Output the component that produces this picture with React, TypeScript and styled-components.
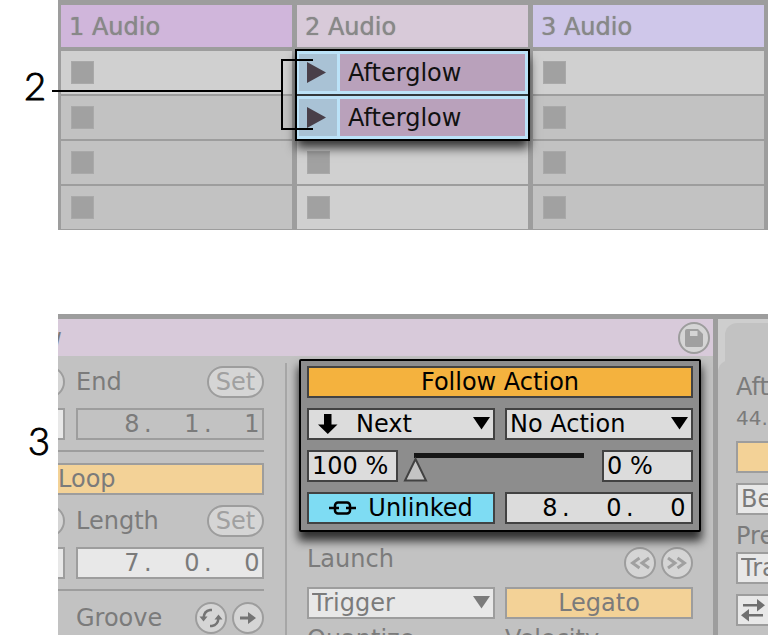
import React from "react";
import styled, { createGlobalStyle, css } from "styled-components";

const GlobalStyle = createGlobalStyle`
  *, *::before, *::after { box-sizing: border-box; }
  html, body { margin: 0; background: #fff; }
  body, button, input, select {
    font-family: "DejaVu Sans", Inter, sans-serif;
    font-size: 24px;
    line-height: 28px;
  }
`;

const line = "#9d9d9d";
const dimText = "#7b7b7b";

const Page = styled.main`
  height: 100vh;
  display: flex;
  flex-direction: column;
  gap: 84px;
  overflow: hidden;
`;

const Figure = styled.section`
  position: relative;
  display: grid;
  grid-template-columns: 58px minmax(0, 1fr);
  &:last-child {
    flex: 1;
    min-height: 0;
  }
`;

const Gutter = styled.div<{ $top: number; $left: number }>`
  padding: ${(p) => p.$top}px 0 0 ${(p) => p.$left}px;
  font-family: Lato, sans-serif;
  font-weight: 300;
  font-size: 38px;
  line-height: 40px;
  color: #000;
  -webkit-text-stroke: 1px #000;
`;

const Callout = styled.svg`
  position: absolute;
  left: 0;
  top: 0;
  pointer-events: none;
`;

/* Session view */

const Session = styled.div`
  display: grid;
  grid-template-columns: repeat(3, minmax(0, 1fr));
  gap: 5px;
  padding: 5px 4px 1px 3px;
  background: ${line};
`;

const Track = styled.div`
  display: flex;
  flex-direction: column;
  gap: 4px;
`;

const TrackTitle = styled.h2<{ $color: string }>`
  margin: 0;
  height: 42px;
  padding: 0 8px;
  background: ${(p) => p.$color};
  color: #888;
  font-size: 24px;
  font-weight: 500;
  line-height: 44px;
  text-shadow: 0 0 1px #888;
`;

const Slots = styled.div`
  display: flex;
  flex-direction: column;
  gap: 2px;
`;

const Slot = styled.div<{ $bright?: boolean }>`
  height: 43px;
  padding: 0 10px;
  display: flex;
  align-items: center;
  background: ${(p) => (p.$bright ? "#d0d0d0" : "#c2c2c2")};
`;

const StopButton = styled.button`
  width: 23px;
  height: 23px;
  padding: 0;
  border: 1px solid #a9a9a9;
  background: #a1a1a1;
`;

const ClipGroup = styled.div`
  position: relative;
  display: flex;
  flex-direction: column;
  gap: 2px;
  background: #33393d;
  box-shadow: 0 0 0 2px #000, 0 8px 10px 1px rgba(0, 0, 0, 0.75);
`;

const Clip = styled.div`
  height: 43px;
  display: grid;
  grid-template-columns: 38px minmax(0, 1fr);
  gap: 3px;
  padding: 3px 3px 3px 2px;
  background: #bbe2f8;
`;

const LaunchButton = styled.button`
  padding: 0 0 0 7px;
  border: 0;
  background: #a9c2d5;
  display: flex;
  align-items: center;
`;

const ClipName = styled.div`
  padding-left: 8px;
  background: #b9a1bb;
  color: #111;
  line-height: 39px;
  height: 37px;
`;

/* Clip view */

const ClipView = styled.div`
  display: grid;
  grid-template-columns: minmax(0, 1fr) 50px;
  gap: 5px;
  padding-top: 5px;
  background: ${line};
  overflow: hidden;
`;

const ClipPanel = styled.div`
  min-width: 0;
  background: #c2c2c2;
`;

const ClipHeader = styled.header`
  height: 37px;
  padding-right: 3px;
  display: flex;
  align-items: center;
  justify-content: space-between;
  background: #d8cada;
`;

const CutTitle = styled.span`
  width: 4px;
  overflow: hidden;
  display: flex;
  justify-content: flex-end;
  color: ${dimText};
`;

const RoundButton = styled.button`
  width: 32px;
  height: 32px;
  padding: 0;
  border: 2px solid ${line};
  border-radius: 50%;
  background: #d5d5d5;
  display: grid;
  place-items: center;
`;

const Columns = styled.div`
  display: grid;
  grid-template-columns: 229px minmax(0, 1fr);
`;

const SampleColumn = styled.div`
  position: relative;
  padding: 10px 23px 0 0;
  display: flex;
  flex-direction: column;
  gap: 10px;
  &::after {
    content: "";
    position: absolute;
    right: 0;
    top: 7px;
    bottom: 0;
    width: 2px;
    background: #a6a6a6;
  }
`;

const SampleRow = styled.div`
  height: 32px;
  display: grid;
  grid-template-columns: 7px minmax(0, 1fr);
  gap: 11px;
`;

const CutCell = styled.div`
  display: flex;
  justify-content: flex-end;
  overflow: hidden;
`;

const RowBody = styled.div`
  display: flex;
  align-items: center;
  gap: 5px;
  color: ${dimText};
`;

const Label = styled.span`
  flex: 1;
  color: ${dimText};
`;

const LaunchLabel = styled(Label)`
  line-height: 24px;
`;

const SetButton = styled.button`
  flex: none;
  width: 57px;
  height: 32px;
  padding: 0;
  border: 2px solid ${line};
  border-radius: 16px;
  background: #d5d5d5;
  color: #a0a0a0;
`;

const Rule = styled.hr`
  width: 100%;
  height: 2px;
  margin: 0 0 1px;
  border: 0;
  background: ${line};
`;

type Tone = "dim" | "flat" | "live";
const tones = {
  dim: css`
    border: 2px solid ${line};
    background: #e8e8e8;
    color: ${dimText};
  `,
  flat: css`
    border: 2px solid ${line};
    background: #c2c2c2;
    color: ${dimText};
  `,
  live: css`
    border: 2px solid #424242;
    background: #dcdcdc;
    color: #000;
  `,
};

const Box = styled.div<{ $tone: Tone }>`
  flex: 1;
  min-width: 0;
  height: 32px;
  padding-right: ${(p) => (p.$tone === "live" ? 5 : 2)}px;
  display: flex;
  align-items: center;
  justify-content: flex-end;
  ${(p) => tones[p.$tone]}
`;

const CutBox = styled.div`
  flex: none;
  width: 7px;
  height: 32px;
  border: 2px solid ${line};
  border-left: 0;
  background: #e8e8e8;
`;

const Part = styled.span<{ $width: number }>`
  flex: none;
  width: ${(p) => p.$width}px;
  display: flex;
  gap: 4px;
`;

const Digit = styled.input`
  width: 16px;
  height: 28px;
  padding: 0;
  border: 0;
  background: none;
  color: inherit;
  text-align: center;
`;

const ToggleButton = styled.button<{ $live?: boolean; $color: string; $left?: boolean }>`
  width: 100%;
  height: 32px;
  padding: 0;
  border: 2px solid ${(p) => (p.$live ? "#424242" : line)};
  background: ${(p) => p.$color};
  color: ${(p) => (p.$live ? "#000" : dimText)};
  display: flex;
  align-items: center;
  justify-content: ${(p) => (p.$left ? "flex-start" : "center")};
  gap: 12px;
`;

const LoopButton = styled(ToggleButton)`
  border-left: 0;
`;

const LaunchColumn = styled.div`
  padding: 3px 12px 0;
`;

const FollowPanel = styled.div`
  position: relative;
  padding: 5px 6px 6px;
  border: 2px solid #000;
  border-radius: 2px;
  background: #8d8d8d;
  box-shadow: 0 8px 10px 1px rgba(0, 0, 0, 0.75);
  display: flex;
  flex-direction: column;
  gap: 10px;
`;

const Pair = styled.div`
  display: grid;
  grid-template-columns: repeat(2, minmax(0, 1fr));
  gap: 10px;
`;

const ChanceRow = styled.div`
  display: grid;
  grid-template-columns: 91px minmax(0, 1fr) 91px;
  column-gap: 5px;
`;

const TextField = styled.input<{ $tone: Tone }>`
  width: 100%;
  height: 32px;
  padding: 0 3px;
  border-radius: 0;
  ${(p) => tones[p.$tone]}
`;

const thumb = `url("data:image/svg+xml,%3Csvg xmlns='http://www.w3.org/2000/svg' width='25' height='26'%3E%3Cpath d='M12.5 3 L23 24.5 H2 Z' fill='%23c4c4c4' stroke='%23424242' stroke-width='2'/%3E%3C/svg%3E")`;

const Slider = styled.input`
  appearance: none;
  width: calc(100% - 1px);
  height: 32px;
  margin: 0;
  background: linear-gradient(#161616, #161616) 11px 3px / calc(100% - 23px) 5px no-repeat;
  &::-webkit-slider-runnable-track {
    height: 32px;
  }
  &::-webkit-slider-thumb {
    appearance: none;
    width: 25px;
    height: 26px;
    margin-top: 6px;
    background: ${thumb};
  }
`;

const SelectWrap = styled.div`
  position: relative;
`;

const Select = styled.select<{ $tone: Tone; $indent?: boolean }>`
  appearance: none;
  width: 100%;
  height: 32px;
  padding: 0 24px 0 ${(p) => (p.$indent ? 47 : 3)}px;
  border-radius: 0;
  ${(p) => tones[p.$tone]}
`;

const SelectArrow = styled.svg`
  position: absolute;
  right: 5px;
  top: 9px;
  pointer-events: none;
`;

const SelectIcon = styled.svg`
  position: absolute;
  left: 11px;
  top: 6px;
  pointer-events: none;
`;

const LaunchArea = styled.div`
  padding: 15px 8px 0;
  display: flex;
  flex-direction: column;
  gap: 8px;
`;

const LaunchHeading = styled.div`
  height: 32px;
  display: flex;
  gap: 5px;
`;

const SamplePanel = styled.aside`
  background: #cecece;
  padding: 4px 0 0 7px;
  overflow: hidden;
`;

const Tab = styled.div`
  height: 100%;
  border-top-left-radius: 12px;
  padding: 50px 0 0 11px;
  background: #c2c2c2;
  box-shadow: -7px 37px 0 0 #c2c2c2;
  color: ${dimText};
  white-space: nowrap;
`;

const TabText = styled.div<{ $small?: boolean }>`
  height: ${(p) => (p.$small ? 40 : 28)}px;
  font-size: ${(p) => (p.$small ? 20 : 24)}px;
  line-height: ${(p) => (p.$small ? 34 : 28)}px;
`;

const Stack = styled.div`
  display: flex;
  flex-direction: column;
  gap: 10px;
  width: 90px;
`;

const Heading = styled.div`
  height: 17px;
  line-height: 22px;
`;

const StopSlot = ({ bright, label }: { bright?: boolean; label: string }) => (
  <Slot $bright={bright}>
    <StopButton aria-label={label} />
  </Slot>
);

const ClipSlot = ({ name }: { name: string }) => (
  <Clip>
    <LaunchButton aria-label={`Launch ${name}`}>
      <svg width="21" height="23" viewBox="0 0 21 23">
        <path d="M1 1 L20 11.5 L1 22 Z" fill="#493f49" />
      </svg>
    </LaunchButton>
    <ClipName>{name}</ClipName>
  </Clip>
);

const Position = ({ label, values, tone, pitch }: { label: string; values: string[]; tone: Tone; pitch: number }) => (
  <Box $tone={tone} role="group" aria-label={label}>
    {values.map((v, i) => (
      <Part key={i} $width={i < 2 ? pitch : 16}>
        <Digit defaultValue={v} aria-label={`${label} ${["bars", "beats", "sixteenths"][i]}`} />
        {i < 2 && "."}
      </Part>
    ))}
  </Box>
);

const DropDown = ({ label, value, tone, icon }: { label: string; value: string; tone: Tone; icon?: React.ReactNode }) => (
  <SelectWrap>
    <Select $tone={tone} $indent={!!icon} aria-label={label}>
      <option>{value}</option>
    </Select>
    {icon}
    <SelectArrow width="17" height="13" viewBox="0 0 17 13">
      <path d="M0 0 H17 L8.5 12.5 Z" fill={tone === "live" ? "#000" : dimText} />
    </SelectArrow>
  </SelectWrap>
);

export default function App() {
  return (
    <>
      <GlobalStyle />
      <Page>
        <Figure>
          <Gutter $top={65} $left={24}>2</Gutter>
          <Session>
            <Track>
              <TrackTitle $color="#d0b6db">1 Audio</TrackTitle>
              <Slots>
                {[1, 2, 3, 4].map((n) => (
                  <StopSlot key={n} bright={n === 1} label={`Stop track 1, slot ${n}`} />
                ))}
              </Slots>
            </Track>
            <Track>
              <TrackTitle $color="#d8cad9">2 Audio</TrackTitle>
              <Slots>
                <ClipGroup>
                  <ClipSlot name="Afterglow" />
                  <ClipSlot name="Afterglow" />
                </ClipGroup>
                <StopSlot bright label="Stop track 2, slot 3" />
                <StopSlot bright label="Stop track 2, slot 4" />
              </Slots>
            </Track>
            <Track>
              <TrackTitle $color="#cfc7ea">3 Audio</TrackTitle>
              <Slots>
                {[1, 2, 3, 4].map((n) => (
                  <StopSlot key={n} bright={n === 1} label={`Stop track 3, slot ${n}`} />
                ))}
              </Slots>
            </Track>
          </Session>
          <Callout width="320" height="140" fill="none" stroke="#000" strokeWidth="2">
            <path d="M52 91 H282 M313 60 H282 V129 H313" />
          </Callout>
        </Figure>

        <Figure>
          <Gutter $top={106} $left={28}>3</Gutter>
          <ClipView>
            <ClipPanel>
              <ClipHeader>
                <CutTitle>w</CutTitle>
                <RoundButton aria-label="Save default clip">
                  <svg width="18" height="18" viewBox="0 0 18 18">
                    <path fillRule="evenodd" d="M2 0 H13 L18 5 V16 Q18 18 16 18 H2 Q0 18 0 16 V2 Q0 0 2 0 Z M5 2 V7 H12.500 V2 Z" fill="#a0a0a0" />
                  </svg>
                </RoundButton>
              </ClipHeader>
              <Columns>
                <SampleColumn>
                  <SampleRow>
                    <CutCell><SetButton aria-label="Set start" /></CutCell>
                    <RowBody><Label>End</Label><SetButton>Set</SetButton></RowBody>
                  </SampleRow>
                  <SampleRow>
                    <CutCell><CutBox /></CutCell>
                    <RowBody><Position label="End" values={["8", "1", "1"]} tone="flat" pitch={60} /></RowBody>
                  </SampleRow>
                  <Rule />
                  <LoopButton $color="#f3d297" $left>Loop</LoopButton>
                  <SampleRow>
                    <CutCell><SetButton aria-label="Set position" /></CutCell>
                    <RowBody><Label>Length</Label><SetButton>Set</SetButton></RowBody>
                  </SampleRow>
                  <SampleRow>
                    <CutCell><CutBox /></CutCell>
                    <RowBody><Position label="Length" values={["7", "0", "0"]} tone="dim" pitch={60} /></RowBody>
                  </SampleRow>
                  <Rule />
                  <SampleRow>
                    <span />
                    <RowBody>
                      <Label>Groove</Label>
                      <RoundButton aria-label="Hot-swap groove">
                        <svg width="24" height="22" viewBox="0 0 24 22" fill="none" stroke="#747474" strokeWidth="2.500">
                          <path d="M13 3 H11 Q5 4 4.500 11" />
                          <path d="M11 19 H13 Q19 18 19.500 11" />
                          <path d="M0.500 9.500 H8.500 L4.500 14.500 Z M15.500 12.500 H23.500 L19.500 7.500 Z" fill="#747474" stroke="none" />
                        </svg>
                      </RoundButton>
                      <RoundButton aria-label="Commit groove">
                        <svg width="18" height="14" viewBox="0 0 18 14">
                          <path d="M1 5.500 H9 V1 L17 7 L9 13 V8.500 H1 Z" fill="#747474" />
                        </svg>
                      </RoundButton>
                    </RowBody>
                  </SampleRow>
                </SampleColumn>

                <LaunchColumn>
                  <FollowPanel>
                    <ToggleButton $live $color="#f4b23e">Follow Action</ToggleButton>
                    <Pair>
                      <DropDown
                        label="Follow action A"
                        value="Next"
                        tone="live"
                        icon={
                          <SelectIcon width="20" height="20" viewBox="0 0 20 20">
                            <path d="M6 0 H13.500 V10.500 H19.500 L9.800 20 L0 10.500 H6 Z" fill="#000" />
                          </SelectIcon>
                        }
                      />
                      <DropDown label="Follow action B" value="No Action" tone="live" />
                    </Pair>
                    <ChanceRow>
                      <TextField $tone="live" defaultValue="100 %" aria-label="Chance A" />
                      <Slider type="range" min="0" max="100" defaultValue="0" aria-label="Chance balance" />
                      <TextField $tone="live" defaultValue="0 %" aria-label="Chance B" />
                    </ChanceRow>
                    <Pair>
                      <ToggleButton $live $color="#7edcf3">
                        <svg width="27" height="14" viewBox="0 0 27 14" fill="none" stroke="#000" strokeWidth="2.500">
                          <rect x="6" y="1.500" width="15" height="11" rx="3" />
                          <path d="M0 7 H10 M17 7 H27" />
                        </svg>
                        Unlinked
                      </ToggleButton>
                      <Position label="Follow action time" values={["8", "0", "0"]} tone="live" pitch={64} />
                    </Pair>
                  </FollowPanel>
                  <LaunchArea>
                    <LaunchHeading>
                      <LaunchLabel>Launch</LaunchLabel>
                      <RoundButton aria-label="Nudge backward">
                        <svg width="20" height="14" viewBox="0 0 20 14" fill="none" stroke="#a0a0a0" strokeWidth="3">
                          <path d="M9.500 2 L2.500 7 L9.500 12 M19 2 L12 7 L19 12" />
                        </svg>
                      </RoundButton>
                      <RoundButton aria-label="Nudge forward">
                        <svg width="20" height="14" viewBox="0 0 20 14" fill="none" stroke="#a0a0a0" strokeWidth="3">
                          <path d="M1 2 L8 7 L1 12 M10.500 2 L17.500 7 L10.500 12" />
                        </svg>
                      </RoundButton>
                    </LaunchHeading>
                    <Pair>
                      <DropDown label="Launch mode" value="Trigger" tone="dim" />
                      <ToggleButton $color="#f3d297">Legato</ToggleButton>
                    </Pair>
                    <Pair>
                      <LaunchLabel>Quantize</LaunchLabel>
                      <LaunchLabel>Velocity</LaunchLabel>
                    </Pair>
                  </LaunchArea>
                </LaunchColumn>
              </Columns>
            </ClipPanel>
            <SamplePanel>
              <Tab>
                <TabText>Aft</TabText>
                <TabText $small>44.1</TabText>
                <Stack>
                  <ToggleButton $color="#f3d297" aria-label="Warp" />
                  <TextField $tone="dim" defaultValue="Be" aria-label="Warp mode" />
                  <Heading>Pre</Heading>
                  <TextField $tone="dim" defaultValue="Tra" aria-label="Preserve" />
                  <ToggleButton $color="#e8e8e8" $left aria-label="Loop mode">
                    <svg width="28" height="24" viewBox="0 0 28 24" fill="#6f6f6f">
                      <path d="M5 6 H19 V1 L27 7.200 L19 13.500 V8.500 H5 Z M25 18.500 H11 V23.500 L3 17.200 L11 11 V16 H25 Z" />
                    </svg>
                  </ToggleButton>
                </Stack>
              </Tab>
            </SamplePanel>
          </ClipView>
        </Figure>
      </Page>
    </>
  );
}
